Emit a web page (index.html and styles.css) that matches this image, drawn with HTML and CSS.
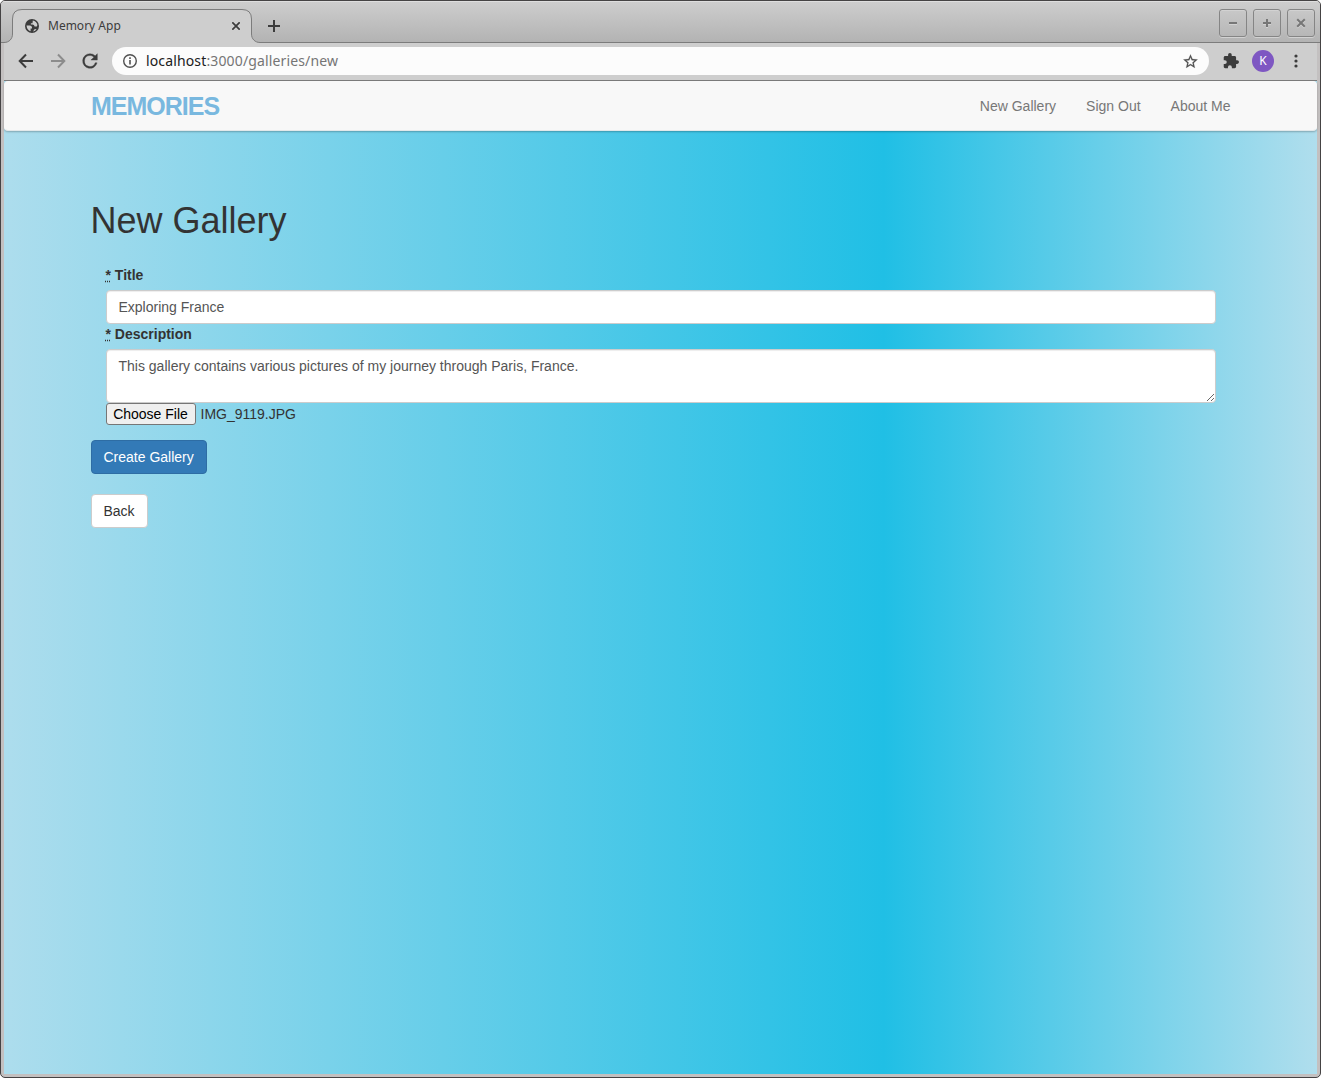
FILE: index.html
```html
<!DOCTYPE html>
<html lang="en">
<head>
<meta charset="utf-8">
<title>Memory App</title>
<link rel="stylesheet" href="styles.css">
</head>
<body>
<div class="window">
  <header class="titlebar">
    <div class="tab">
      <svg class="tab-edge" width="256" height="34" viewBox="0 0 256 34"><path d="M0 33.500C5 33.500 8.500 30 8.500 25V10Q8.500 .5 18 .5H238Q247.500 .5 247.500 10V25C247.500 30 251 33.500 256 33.500V34H0Z" fill="#cecece"/><path d="M0 33.500C5 33.500 8.500 30 8.500 25V10Q8.500 .5 18 .5H238Q247.500 .5 247.500 10V25C247.500 30 251 33.500 256 33.500" fill="none" stroke="#7c7c7c"/></svg>
      <svg class="globe" width="14" height="14" viewBox="0 0 14 14"><circle cx="7" cy="7" r="7" fill="#3c3c3c"/><path d="M1.500 6.500H4.800Q6.900 6.700 7 8.500V9.500H5.600V12.300Q2 11 1.500 6.500ZM7.800 1.500Q11.500 2 12.400 6L11.800 7.500H9.600Q9.400 5.700 7.500 5.600H5.900V4.200H7.500ZM8 12.400 9.500 10.300 11.600 9.900Q10.500 11.900 8 12.400Z" fill="#cecece"/></svg>
      <span class="tab-title">Memory App</span>
      <svg class="tab-close" width="8" height="8" viewBox="0 0 8 8"><path d="M.3.3l7.400 7.400M7.700.3L.3 7.700" stroke="#3c3c3c" stroke-width="1.700"/></svg>
    </div>
    <svg class="new-tab" width="12" height="12" viewBox="0 0 12 12"><path d="M6 0v12M0 6h12" stroke="#3c3c3c" stroke-width="2"/></svg>
    <div class="window-controls">
      <span class="control"><svg width="10" height="10" viewBox="0 0 10 10"><path d="M1 5h8" stroke="#777" stroke-width="2"/></svg></span>
      <span class="control"><svg width="10" height="10" viewBox="0 0 10 10"><path d="M1 5h8M5 1v8" stroke="#777" stroke-width="2"/></svg></span>
      <span class="control"><svg width="10" height="10" viewBox="0 0 10 10"><path d="M1.200 1.200l7.600 7.600M8.800 1.200l-7.600 7.600" stroke="#777" stroke-width="2"/></svg></span>
    </div>
  </header>
  <div class="toolbar">
    <svg class="nav-icon" width="24" height="24" viewBox="0 0 24 24"><path d="M19 12H6M12 5.500 5.700 12l6.300 6.500" fill="none" stroke="#3c3c3c" stroke-width="2"/></svg>
    <svg class="nav-icon" width="24" height="24" viewBox="0 0 24 24"><path d="M5 12h13M12 5.500l6.300 6.500-6.300 6.500" fill="none" stroke="#8c8c8c" stroke-width="2"/></svg>
    <svg class="nav-icon" width="22" height="22" viewBox="0 0 24 24"><path d="M17.650 6.350A7.960 7.960 0 0 0 12 4a8 8 0 1 0 7.730 10h-2.080A6 6 0 1 1 12 6c1.660 0 3.140.69 4.220 1.780L13 11h7V4z" fill="#3c3c3c" stroke="#3c3c3c" stroke-width=".4"/></svg>
    <div class="address">
      <svg width="16" height="16" viewBox="0 0 16 16"><circle cx="8" cy="8" r="6.300" fill="none" stroke="#505050" stroke-width="1.400"/><path d="M8 7v4.500M8 4.300v1.600" stroke="#505050" stroke-width="1.600"/></svg>
      <span class="url"><b>localhost</b>:3000/galleries/new</span>
      <svg class="star" width="17" height="17" viewBox="0 0 24 24"><path d="m22 9.240-7.190-.62L12 2 9.190 8.630 2 9.240l5.460 4.730L5.820 21 12 17.270 18.180 21l-1.630-7.030zM12 15.400l-3.760 2.270 1-4.280-3.320-2.880 4.380-.38L12 6.100l1.710 4.040 4.380.38-3.320 2.880 1 4.280z" fill="#505050" stroke="#505050" stroke-width=".3"/></svg>
    </div>
    <svg class="puzzle" width="16" height="16" viewBox="1 1 22 22"><path d="M20.500 11H19V7c0-1.100-.9-2-2-2h-4V3.500a2.500 2.500 0 0 0-5 0V5H4c-1.100 0-1.990.9-1.990 2v3.800H3.500a2.700 2.700 0 0 1 0 5.400H2V20c0 1.100.9 2 2 2h3.800v-1.500a2.700 2.700 0 0 1 5.400 0V22H17c1.100 0 2-.9 2-2v-4h1.500a2.500 2.500 0 0 0 0-5z" fill="#3c3c3c"/></svg>
    <span class="avatar">K</span>
    <svg class="dots" width="4" height="14" viewBox="0 0 4 14"><g fill="#3c3c3c"><circle cx="2" cy="2" r="1.600"/><circle cx="2" cy="7" r="1.600"/><circle cx="2" cy="12" r="1.600"/></g></svg>
  </div>
  <div class="page">
    <nav class="navbar">
      <a class="brand">MEMORIES</a>
      <div class="links"><a>New Gallery</a><a>Sign Out</a><a>About Me</a></div>
    </nav>
    <main class="container">
      <h1>New Gallery</h1>
      <form>
        <div class="fields">
          <label><abbr title="required">*</abbr> Title</label>
          <input class="form-control" type="text" value="Exploring France">
          <label><abbr title="required">*</abbr> Description</label>
          <textarea class="form-control">This gallery contains various pictures of my journey through Paris, France.</textarea>
          <div class="file"><button class="choose" type="button">Choose File</button><span>IMG_9119.JPG</span></div>
        </div>
        <button class="btn primary" type="button">Create Gallery</button>
      </form>
      <a class="btn back">Back</a>
    </main>
  </div>
</div>
</body>
</html>
```
FILE: styles.css
```css
* { box-sizing: border-box; }
body { margin: 0; background: #fff; font-family: "Liberation Sans", Arial, sans-serif; font-size: 14px; line-height: 20px; color: #333; }
.window { width: 1321px; height: 1078px; border: 1px solid #454344; border-radius: 5px; padding: 0 3px 3px; background: #c3c0c0; overflow: hidden; display: flex; flex-direction: column; }
.titlebar { height: 42px; flex: none; margin: 0 -3px; padding: 7px 5px 0 7px; display: flex; align-items: flex-start; border-top: 1px solid #dedede; border-bottom: 1px solid #7c7c7c; background: linear-gradient(#cdcdcd, #b3b3b3); }
.tab { position: relative; width: 248px; height: 33px; margin-left: -4px; padding: 0 12px 0 21px; display: flex; align-items: center; }
.tab-edge { position: absolute; left: 0; top: 0; }
.globe { position: relative; }
.tab-title { position: relative; flex: 1; padding-left: 9px; font: 12px/16px "Noto Sans", sans-serif; color: #3c3c3c; }
.tab-close { position: relative; }
.new-tab { margin: 11px 0 0 16px; }
.window-controls { margin-left: auto; display: flex; gap: 6px; }
.control { width: 28px; height: 28px; border: 1px solid #858585; border-radius: 3px; display: flex; align-items: center; justify-content: center; filter: drop-shadow(0 1px 0 #d2d2d2); }
.toolbar { height: 38px; flex: none; display: flex; align-items: center; padding: 0 20px 1px 10px; background: #cecece; border-bottom: 1px solid #7c7c7c; }
.nav-icon { margin-right: 8px; flex: none; }
.nav-icon + .nav-icon + .nav-icon { margin: 0 11px 0 1px; }
.address { width: 1097px; height: 28px; flex: none; border-radius: 14px; background: #fcfcfc; display: flex; align-items: center; padding: 0 10px; }
.url { flex: 1; padding-left: 8px; font: 14px/20px "Noto Sans", sans-serif; letter-spacing: .14px; color: #757575; }
.url b { font-weight: 400; color: #202020; }
.puzzle { margin-left: 14px; flex: none; }
.avatar { width: 22px; height: 22px; flex: none; margin-left: 13px; border-radius: 50%; background: #7e57c2; color: #fff; text-align: center; font: 12px/22px "Noto Sans", sans-serif; }
.dots { margin-left: 20px; flex: none; }
.page { flex: 1; background: linear-gradient(90deg, #addded, #20bfe5 67%, #b0deed); }
.navbar { height: 50px; padding: 0 86px; display: flex; align-items: center; justify-content: space-between; background: #f8f8f8; border: 1px solid #f8f8f8; border-bottom-color: #e2e8ea; border-radius: 4px; box-shadow: 0 1px 2px rgba(0,0,0,.25); }
.brand { font-size: 25px; font-weight: 700; letter-spacing: -1px; color: #79b8df; }
.links { display: flex; gap: 30px; color: #777; margin-right: -.5px; }
.container { padding: 70px 86.5px 0; }
h1 { margin: 0 0 24px; font-size: 36px; font-weight: 500; line-height: 40px; }
.fields { padding: 0 15px; display: flex; flex-direction: column; }
label { font-weight: 700; margin-bottom: 5px; }
abbr { text-decoration: underline dotted; }
.form-control { width: 100%; height: 34px; padding: 6px 12px; border: 1px solid #ccc; border-radius: 4px; background: #fff; box-shadow: inset 0 1px 1px rgba(0,0,0,.075); font: inherit; color: #555; }
textarea.form-control { height: 54px; display: block; resize: vertical; }
.file { height: 22px; display: flex; align-items: center; gap: 5px; }
.choose { width: 90px; height: 22px; padding: 0; border: 1px solid #767676; border-radius: 3px; background: #efefef; font: inherit; color: #000; line-height: 18px; }
.btn { display: inline-block; height: 34px; padding: 6px 12px; border: 1px solid #ccc; border-radius: 4px; font: inherit; background: #fff; color: #333; }
.primary { display: block; margin: 15px 0 20px; background: #337ab7; border-color: #2e6da4; color: #fff; }
```
